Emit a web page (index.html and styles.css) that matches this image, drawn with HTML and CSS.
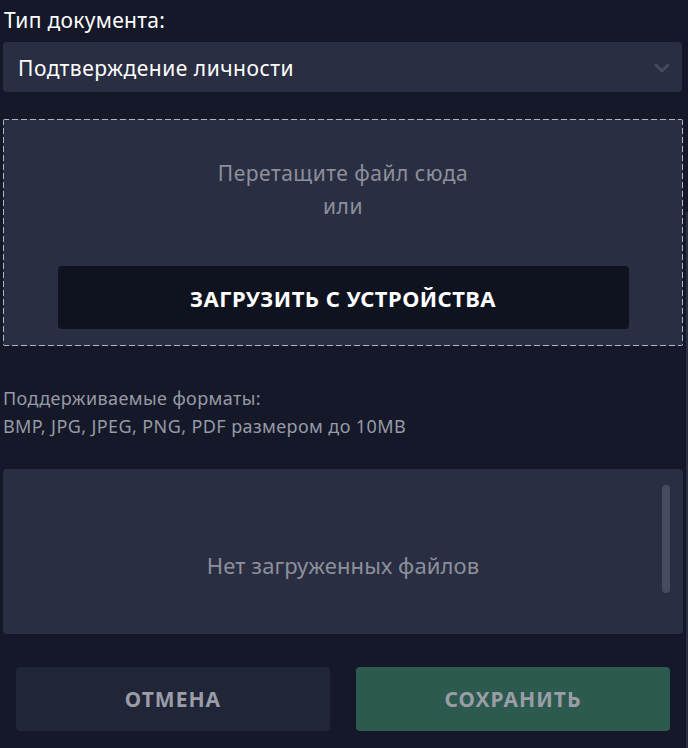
FILE: index.html
```html
<!DOCTYPE html>
<html lang="ru">
<head>
<meta charset="utf-8">
<link rel="stylesheet" href="styles.css">
</head>
<body>
<div class="form">
  <div class="field-label">Тип документа:</div>
  <div class="select">
    <span class="select-value">Подтверждение личности</span>
    <svg class="chevron" width="16" height="10" viewBox="0 0 16 10"><path d="M2 2l6 6 6-6" fill="none" stroke="#464a5e" stroke-width="3" stroke-linecap="round" stroke-linejoin="round"/></svg>
  </div>
  <div class="dropzone">
    <div class="drop-hint">Перетащите файл сюда<br>или</div>
    <button class="upload-btn">Загрузить с устройства</button>
  </div>
  <div class="formats">Поддерживаемые форматы:<br>BMP, JPG, JPEG, PNG, PDF размером до 10MB</div>
  <div class="files">
    <div class="files-empty">Нет загруженных файлов</div>
    <div class="files-thumb"></div>
  </div>
  <div class="actions">
    <button class="btn btn-cancel">Отмена</button>
    <button class="btn btn-save">Сохранить</button>
  </div>
</div>
<div class="page-scroll"></div>
</body>
</html>
```
FILE: styles.css
```css
html, body {
  margin: 0;
  padding: 0;
  background: #141829;
  font-family: "Noto Sans", "Open Sans", sans-serif;
  overflow: hidden;
}

.form {
  width: 688px;
  height: 748px;
  padding-left: 3px;
  box-sizing: border-box;
  display: flex;
  flex-direction: column;
}

.field-label {
  color: #ffffff;
  font-size: 21px;
  letter-spacing: 0.3px;
  line-height: 24px;
  margin-top: 8px;
  padding-left: 1px;
}

.select {
  margin-top: 10px;
  height: 50px;
  width: 679px;
  background: #2a2e42;
  border-radius: 4px;
  display: flex;
  align-items: center;
  justify-content: space-between;
  padding: 1px 12px 0 15px;
  box-sizing: border-box;
}

.select-value {
  color: #ffffff;
  font-size: 21px;
  letter-spacing: 0.5px;
}

.chevron {
  display: block;
}

/* dashed frame drawn with gradients: 6px dash, 3px gap */
.dropzone {
  margin-top: 27px;
  height: 227px;
  width: 680px;
  box-sizing: border-box;
  background:
    linear-gradient(to right, #b2b4bd 6px, transparent 6px) top left / 9px 1px repeat-x,
    linear-gradient(to right, #b2b4bd 6px, transparent 6px) bottom left / 9px 1px repeat-x,
    linear-gradient(to bottom, #b2b4bd 6px, transparent 6px) top left / 1px 9px repeat-y,
    linear-gradient(to bottom, #b2b4bd 6px, transparent 6px) top right / 1px 9px repeat-y,
    #2a2e42;
  border-radius: 2px;
  padding-top: 1px;
  display: flex;
  flex-direction: column;
  align-items: center;
}

.drop-hint {
  margin-top: 37px;
  color: #8d909b;
  font-size: 21px;
  letter-spacing: 0.5px;
  line-height: 33px;
  text-align: center;
}

.upload-btn {
  margin-top: 43px;
  width: 571px;
  height: 63px;
  padding: 0;
  background: #0f1320;
  border: none;
  border-radius: 4px;
  color: #ffffff;
  font-family: inherit;
  font-size: 22px;
  font-weight: 700;
  letter-spacing: 0.45px;
  text-transform: uppercase;
}

.formats {
  margin-top: 38px;
  color: #979aa5;
  font-size: 18px;
  letter-spacing: 0.4px;
  line-height: 28px;
}

.files {
  margin-top: 29px;
  height: 165px;
  width: 680px;
  background: #2a2e42;
  border-radius: 4px;
  position: relative;
  display: flex;
  align-items: center;
  justify-content: center;
}

.files-empty {
  margin-top: 26px;
  color: #8d909b;
  font-size: 22px;
  letter-spacing: 0.1px;
}

.files-thumb {
  position: absolute;
  top: 16px;
  right: 13px;
  width: 8px;
  height: 108px;
  border-radius: 4px;
  background: #474b5f;
}

.actions {
  margin-top: 33px;
  margin-left: 13px;
  width: 654px;
  display: flex;
  gap: 26px;
}

.btn {
  flex: 1;
  height: 64px;
  padding: 0;
  border: none;
  border-radius: 4px;
  font-family: inherit;
  font-size: 21px;
  font-weight: 700;
  letter-spacing: 1px;
  text-transform: uppercase;
  color: #9b9da6;
}

.btn-cancel {
  background: #212538;
}

.btn-save {
  background: #2c5a4e;
}

/* thin overlay scrollbar of the page */
.page-scroll {
  position: absolute;
  top: 212px;
  right: 0;
  width: 2px;
  height: 536px;
  background: #2b2f42;
}
```
